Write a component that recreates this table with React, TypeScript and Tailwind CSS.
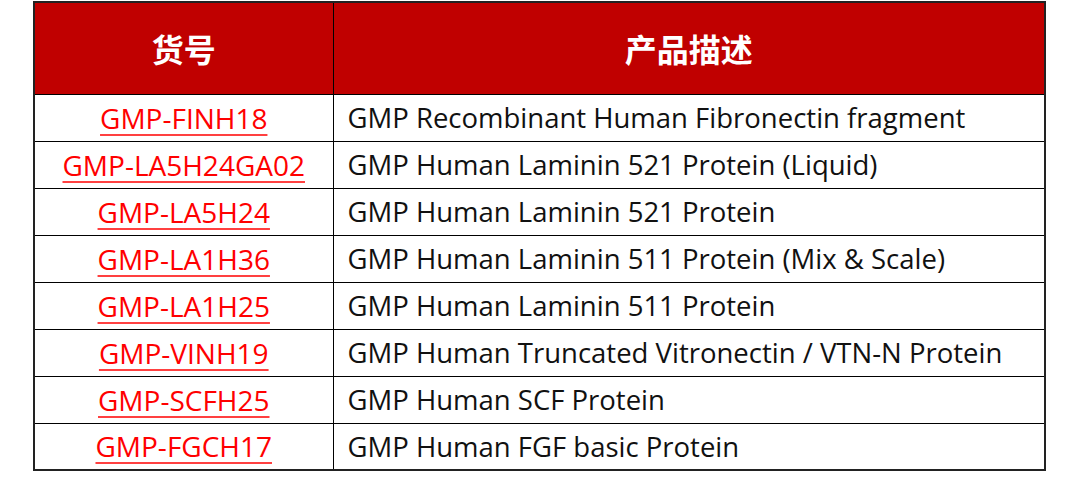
import React from 'react';

const rows = [
  { code: 'GMP-FINH18', desc: 'GMP Recombinant Human Fibronectin fragment' },
  { code: 'GMP-LA5H24GA02', desc: 'GMP Human Laminin 521 Protein (Liquid)' },
  { code: 'GMP-LA5H24', desc: 'GMP Human Laminin 521 Protein' },
  { code: 'GMP-LA1H36', desc: 'GMP Human Laminin 511 Protein (Mix & Scale)' },
  { code: 'GMP-LA1H25', desc: 'GMP Human Laminin 511 Protein' },
  { code: 'GMP-VINH19', desc: 'GMP Human Truncated Vitronectin / VTN-N Protein' },
  { code: 'GMP-SCFH25', desc: 'GMP Human SCF Protein' },
  { code: 'GMP-FGCH17', desc: 'GMP Human FGF basic Protein' },
];

export default function App() {
  return (
    <div className="w-[1080px] h-[485px] bg-white pt-px pl-[33px] font-['Open_Sans','Noto_Sans_CJK_SC',sans-serif]">
      <table className="w-[1013px] border-collapse border-2 border-[#222]">
        <thead>
          <tr className="h-[92px] bg-[#c00000] text-white">
            <th className="w-[299px] border border-black text-[32px] font-bold font-['Noto_Sans_CJK_SC',sans-serif]">货号</th>
            <th className="border border-black text-[32px] font-bold font-['Noto_Sans_CJK_SC',sans-serif]">产品描述</th>
          </tr>
        </thead>
        <tbody>
          {rows.map((r) => (
            <tr key={r.code} className="h-[47px]">
              <td className="border border-black text-center text-[28px] leading-none">
                <a className="text-[#ff0000] underline decoration-[#ff4040] decoration-2 underline-offset-[5px]">{r.code}</a>
              </td>
              <td className="border border-black pl-[14px] text-[27.5px] leading-none text-[#111]">{r.desc}</td>
            </tr>
          ))}
        </tbody>
      </table>
    </div>
  );
}
